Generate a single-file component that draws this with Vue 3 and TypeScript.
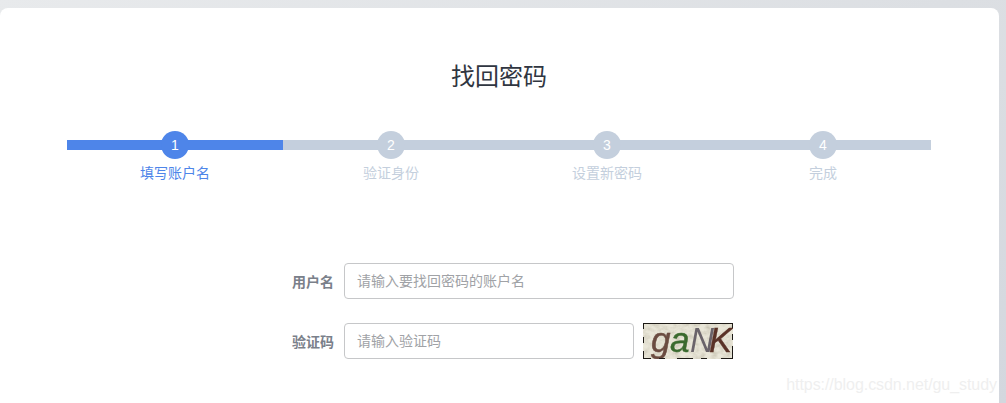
<script setup lang="ts">
interface Step { n: number; label: string; active: boolean }
const steps: Step[] = [
  { n: 1, label: '填写账户名', active: true },
  { n: 2, label: '验证身份', active: false },
  { n: 3, label: '设置新密码', active: false },
  { n: 4, label: '完成', active: false },
]
</script>

<template>
  <div class="page">
    <main class="card">
      <h1 class="title">找回密码</h1>
      <ol class="steps">
        <li v-for="s in steps" :key="s.n" class="step" :class="{ active: s.active }">
          <span class="circle">{{ s.n }}</span>
          <span class="label">{{ s.label }}</span>
        </li>
      </ol>
      <form class="form" @submit.prevent>
        <div class="row">
          <label class="field-label">用户名</label>
          <input class="input" type="text" placeholder="请输入要找回密码的账户名" />
        </div>
        <div class="row">
          <label class="field-label">验证码</label>
          <input class="input short" type="text" placeholder="请输入验证码" />
          <svg class="captcha" width="90" height="36" viewBox="0 0 90 36" role="img" aria-label="captcha">
            <defs>
              <filter id="noise" x="0" y="0" width="100%" height="100%">
                <feTurbulence type="fractalNoise" baseFrequency="0.16 0.24" numOctaves="3" seed="7" />
                <feColorMatrix type="matrix" values="0 0 0 0 0.55  0 0 0 0 0.52  0 0 0 0 0.42  0.9 0.9 0 0 -0.72" />
              </filter>
              <filter id="soft"><feGaussianBlur stdDeviation="0.4" /></filter>
            </defs>
            <rect width="90" height="36" fill="#e9e6d8" />
            <rect width="90" height="36" filter="url(#noise)" />
            <g filter="url(#soft)" font-family="'Liberation Sans', sans-serif" font-style="italic" font-size="35">
              <text x="8" y="29" fill="#6a4b40" stroke="#6a4b40" stroke-width=".5">g</text>
              <text x="27" y="29" fill="#3a6a2e" stroke="#3a6a2e" stroke-width=".5">a</text>
              <text x="47" y="29" fill="#6a646a" textLength="24" lengthAdjust="spacingAndGlyphs">N</text>
              <text x="66" y="29" fill="#5a3128" stroke="#5a3128" stroke-width=".4" textLength="23" lengthAdjust="spacingAndGlyphs">K</text>
            </g>
            <path d="M0 .5H90M0 35.5H8M16 35.5H22M34 35.5H50M58 35.5H64M78 35.5H90" stroke="#1d1a16" fill="none" />
            <path d="M.5 0V6M.5 14V20M.5 28V36M89.5 0V5M89.5 11V17M89.5 23V36" stroke="#1d1a16" fill="none" />
          </svg>
        </div>
      </form>
    </main>
    <div class="watermark">https://blog.csdn.net/gu_study</div>
  </div>
</template>

<style>
html, body { margin: 0; padding: 0; }
</style>

<style scoped>
.page {
  position: relative;
  box-sizing: border-box;
  width: 1006px;
  height: 403px;
  overflow: hidden;
  padding-top: 8px;
  background: linear-gradient(160deg, #e8eaec 0%, #dcdfe3 45%, #d3d7de 100%);
  font-family: "Liberation Sans", "Noto Sans CJK SC", sans-serif;
}
.card {
  box-sizing: border-box;
  width: 999px;
  height: 395px;
  padding: 54px 68px 0 67px;
  background: #fff;
  border-radius: 8px 8px 0 0;
}
.title {
  margin: 0;
  font-size: 24px;
  line-height: 30px;
  font-weight: 400;
  text-align: center;
  color: #303641;
}
.steps {
  display: flex;
  list-style: none;
  margin: 39px 0 0;
  padding: 0;
}
.step {
  flex: 0 0 216px;
  display: flex;
  flex-direction: column;
  align-items: center;
  background: linear-gradient(#c4cfdd, #c4cfdd) no-repeat 0 9px / 100% 10px;
}
.circle {
  width: 28px;
  height: 28px;
  border-radius: 50%;
  background: #c4cfdd;
  color: #fff;
  font-size: 14px;
  line-height: 28px;
  text-align: center;
}
.label {
  margin-top: 6px;
  font-size: 14px;
  line-height: 16px;
  color: #c4cfdd;
}
.step.active { background-image: linear-gradient(#4e85e9, #4e85e9); }
.active .circle { background: #4e85e9; }
.active .label { color: #4e85e9; }
.form {
  margin: 82px 0 0 187px;
  display: flex;
  flex-direction: column;
  gap: 24px;
}
.row {
  display: flex;
  align-items: center;
}
.field-label {
  width: 80px;
  margin-right: 10px;
  text-align: right;
  font-size: 14px;
  font-weight: 700;
  color: #7a808a;
}
.input {
  box-sizing: border-box;
  width: 390px;
  height: 36px;
  padding: 0 12px;
  border: 1px solid #c6c7c9;
  border-radius: 4px;
  outline: none;
  font: 14px "Liberation Sans", "Noto Sans CJK SC", sans-serif;
  background: #fff;
}
.input::placeholder { color: #a0a2a6; opacity: 1; }
.input.short { width: 290px; }
.captcha { margin-left: 9px; display: block; flex: none; }
.watermark {
  position: absolute;
  right: 9px;
  top: 376px;
  font-size: 16px;
  line-height: 18px;
  letter-spacing: -0.06px;
  color: #efefef;
}
</style>
